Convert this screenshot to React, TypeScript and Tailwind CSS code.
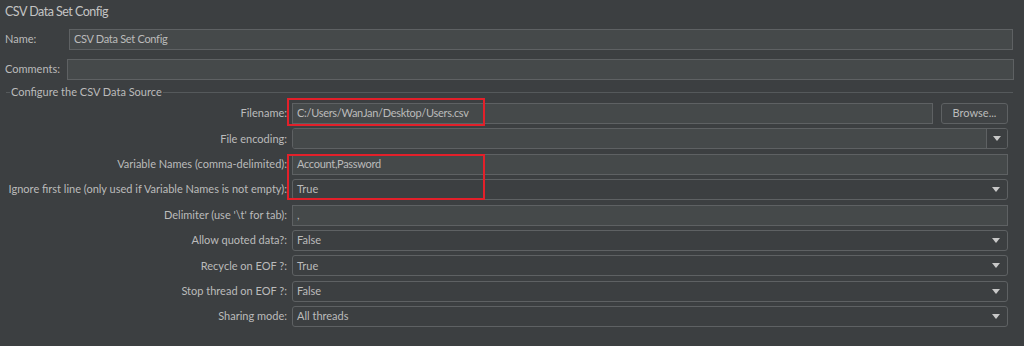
import React from "react";

const font = { fontFamily: 'Lato, "Open Sans", sans-serif' };

function Arrow() {
  return (
    <svg width="8" height="5" viewBox="0 0 8 5" className="shrink-0">
      <path d="M0 0 H8 L4 5 Z" fill="#c8c8c8" />
    </svg>
  );
}

function TextField({ value, className = "" }: { value?: string; className?: string }) {
  return (
    <div
      className={`h-[21px] bg-[#45494a] border border-[#5e6163] flex items-center pl-[4px] text-[11px] tracking-[-0.3px] text-[#bbbbbb] whitespace-nowrap ${className}`}
    >
      {value}
    </div>
  );
}

function Combo({ value }: { value: string }) {
  return (
    <div className="h-[21px] w-[716px] rounded-[3px] border border-[#5e6163] bg-[#3c3f41] flex items-center pl-[4px] pr-[7px] text-[11px] text-[#bbbbbb]">
      <span className="flex-1">{value}</span>
      <Arrow />
    </div>
  );
}

function EditCombo() {
  return (
    <div className="h-[21px] w-[716px] rounded-[3px] border border-[#5e6163] flex overflow-hidden">
      <div className="flex-1 bg-[#45494a] border-r border-[#5e6163]" />
      <div className="w-[20px] bg-[#3c3f41] flex items-center justify-center">
        <Arrow />
      </div>
    </div>
  );
}

function Row({ label, children }: { label: string; children: React.ReactNode }) {
  return (
    <div className="flex items-center h-[21px]">
      <div className="w-[288px] shrink-0 text-right pr-[1px] text-[11px] text-[#bbbbbb] whitespace-nowrap">{label}</div>
      <div className="ml-[4px] flex">{children}</div>
    </div>
  );
}

export default function App() {
  return (
    <div className="relative w-[1024px] h-[346px] bg-[#3c3f41] overflow-hidden text-[#bbbbbb]" style={font}>
      {/* title */}
      <div className="pl-[5px] pt-[2px] h-[29px] text-[12.5px] tracking-[-0.5px] leading-[20px] text-[#c4c4c4]">
        CSV Data Set Config
      </div>

      {/* name / comments */}
      <div className="flex items-center h-[21px]">
        <span className="w-[69px] pl-[5px] text-[11px]">Name:</span>
        <TextField value="CSV Data Set Config" className="w-[944px]" />
      </div>
      <div className="flex items-center h-[21px] mt-[9px]">
        <span className="w-[67px] pl-[5px] text-[11px] whitespace-nowrap">Comments:</span>
        <TextField className="w-[947px]" />
      </div>

      {/* group title */}
      <div className="flex items-center h-[12px] mt-[6px] pl-[6px] w-[1013px]">
        <div className="w-[4px] h-px bg-[#55595b]" />
        <span className="px-[1px] text-[11px] leading-[12px]">Configure the CSV Data Source</span>
        <div className="flex-1 h-px bg-[#55595b]" />
      </div>

      {/* group rows */}
      <div className="mt-[5px] flex flex-col gap-y-[4.4px]">
        <Row label="Filename:">
          <TextField value="C:/Users/WanJan/Desktop/Users.csv" className="w-[641px]" />
          <div className="ml-[8px] w-[67px] h-[21px] rounded-[3px] border border-[#5e6163] bg-[#404345] flex items-center justify-center text-[11px]">
            Browse...
          </div>
        </Row>
        <Row label="File encoding:">
          <EditCombo />
        </Row>
        <Row label="Variable Names (comma-delimited):">
          <TextField value="Account,Password" className="w-[716px]" />
        </Row>
        <Row label="Ignore first line (only used if Variable Names is not empty):">
          <Combo value="True" />
        </Row>
        <Row label="Delimiter (use '\t' for tab):">
          <TextField value="," className="w-[716px]" />
        </Row>
        <Row label="Allow quoted data?:">
          <Combo value="False" />
        </Row>
        <Row label="Recycle on EOF ?:">
          <Combo value="True" />
        </Row>
        <Row label="Stop thread on EOF ?:">
          <Combo value="False" />
        </Row>
        <Row label="Sharing mode:">
          <Combo value="All threads" />
        </Row>
      </div>

      {/* red annotation boxes */}
      <div className="absolute left-[287px] top-[98px] w-[198px] h-[28px] border-2 border-[#e3202a]" />
      <div className="absolute left-[287px] top-[154px] w-[198px] h-[46px] border-2 border-[#e3202a]" />
    </div>
  );
}
